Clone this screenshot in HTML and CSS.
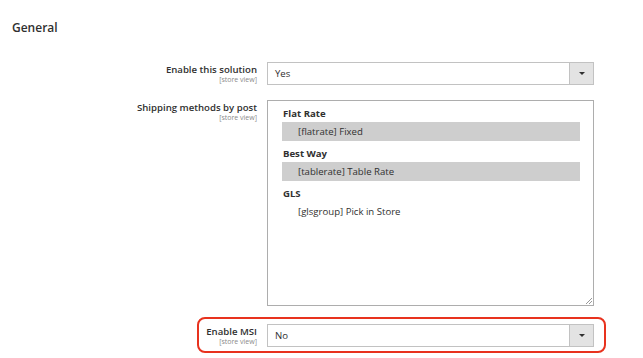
FILE: index.html
```html
<!DOCTYPE html>
<html>
<head>
<meta charset="utf-8">
<link rel="stylesheet" href="styles.css">
</head>
<body>
<div class="page">
  <h2 class="title">General</h2>
  <div class="fields">
    <div class="field">
      <div class="label"><span class="name">Enable this solution</span><span class="scope">[store view]</span></div>
      <div class="select"><span class="value">Yes</span><span class="btn"><span class="arrow"></span></span></div>
    </div>
    <div class="field">
      <div class="label"><span class="name">Shipping methods by post</span><span class="scope">[store view]</span></div>
      <div class="multi">
        <div class="group">Flat Rate</div>
        <div class="opt sel">[flatrate] Fixed</div>
        <div class="group">Best Way</div>
        <div class="opt sel">[tablerate] Table Rate</div>
        <div class="group">GLS</div>
        <div class="opt">[glsgroup] Pick in Store</div>
        <svg class="grip" width="8" height="8" viewBox="0 0 8 8"><path d="M7 1 L1 7 M7 4 L4 7" stroke="#999" stroke-width="1" fill="none"/></svg>
      </div>
    </div>
    <div class="field hl">
      <div class="label"><span class="name">Enable MSI</span><span class="scope">[store view]</span></div>
      <div class="select"><span class="value">No</span><span class="btn"><span class="arrow"></span></span></div>
    </div>
  </div>
</div>
</body>
</html>
```
FILE: styles.css
```css
html, body { margin: 0; padding: 0; background: #fff; }
body { font-family: "Open Sans", "Noto Sans", sans-serif; color: #303030; min-height: 358px; }
.page { padding: 18px 0 11px 12px; width: 582px; }
.title { margin: 0; font-size: 12px; font-weight: 600; line-height: 20px; color: #303030; }
.fields { display: flex; flex-direction: column; margin-top: 24px; }
.field { display: flex; gap: 10px; align-items: flex-start; }
.field + .field { margin-top: 15px; }
.label { width: 245px; display: flex; flex-direction: column; align-items: flex-end; padding-top: 1px; }
.name { font-size: 9.6px; font-weight: 600; line-height: 13px; color: #303030; }
.scope { font-size: 7px; line-height: 8px; color: #8a8a8a; }
.select { width: 325px; height: 21px; border: 1px solid #c2c2c2; display: flex; align-items: stretch; }
.value { flex: 1; font-size: 9.6px; line-height: 21px; padding-left: 7px; color: #303030; }
.btn { width: 23px; background: #e3e3e3; border-left: 1px solid #c2c2c2; display: flex; align-items: center; justify-content: center; }
.arrow { width: 0; height: 0; border-left: 3px solid transparent; border-right: 3px solid transparent; border-top: 3.5px solid #303030; }
.multi { position: relative; height: 204px; border: 1px solid #adadad; padding: 0 13px 0 14px; box-sizing: content-box; width: 298px; }
.group { font-size: 9.6px; font-weight: 700; line-height: 17px; padding: 4px 0 0 1px; color: #303030; }
.opt { font-size: 9.6px; line-height: 19px; padding-left: 16px; color: #303030; }
.opt.sel { background: #cecece; }
.grip { position: absolute; right: 0; bottom: 0; }
.field.hl { position: relative; margin-top: 18px; }
.field.hl::after { content: ""; position: absolute; left: 185px; right: -12px; top: -7px; bottom: -6px; border: 2px solid #e8321e; border-radius: 8px; pointer-events: none; }
```
